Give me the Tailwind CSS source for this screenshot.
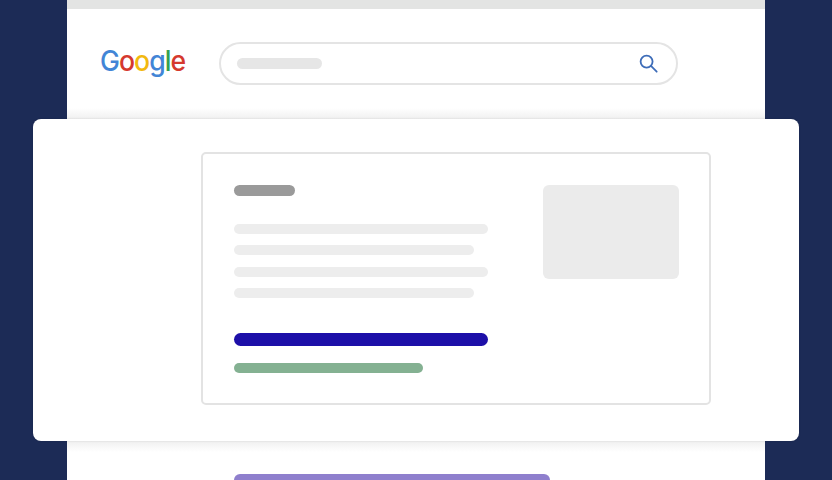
<!DOCTYPE html>
<html>
<head>
<meta charset="utf-8">
<script src="https://cdn.jsdelivr.net/npm/@tailwindcss/browser@4"></script>
</head>
<body class="m-0 h-[480px] w-[832px] overflow-hidden bg-[#1c2b56]">
<div class="ml-[67px] flex h-[480px] w-[698px] flex-col overflow-visible bg-white">
  <div class="h-[9px] shrink-0 bg-[#e3e4e3]"></div>
  <header class="flex h-[99px] shrink-0 items-start pt-[33px]">
    <div class="ml-[33px] -mt-[2px] flex h-[42px] w-[119px] origin-left scale-x-[0.95] items-center font-['Inter',sans-serif] text-[28px] font-medium leading-none tracking-[-1px]">
      <span class="text-[#4285d6]">G</span><span class="text-[#d5392e]">o</span><span class="text-[#f2b90f]">o</span><span class="text-[#4285d6]">g</span><span class="text-[#34a04f]">l</span><span class="text-[#d5392e]">e</span>
    </div>
    <div class="flex h-[43px] w-[459px] items-center justify-between rounded-full border-2 border-[#e4e4e4] pl-[16px] pr-[18px]">
      <div class="h-[11px] w-[85px] rounded-full bg-[#e6e6e6]"></div>
      <svg class="h-[19px] w-[19px]" viewBox="0 0 20 20" fill="none" stroke="#3d6cb8" stroke-width="1.9" stroke-linecap="round">
        <circle cx="8" cy="8" r="6.3"/>
        <path d="M12.6 12.6 L18.6 18.6"/>
      </svg>
    </div>
  </header>
  <div class="h-[11px] shrink-0 bg-gradient-to-b from-white to-[#f0f0f0]"></div>
  <main class="relative z-10 -ml-[34px] flex h-[322px] w-[766px] shrink-0 rounded-lg bg-white pl-[168px] pt-[33px] shadow-[0_0_2px_rgba(0,0,0,0.15)]">
    <div class="flex h-[253px] w-[510px] rounded-[5px] border-2 border-[#e3e3e3] pl-[31px] pt-[31px]">
      <div class="w-[254px]">
        <div class="h-[11px] w-[61px] rounded-full bg-[#9a9a9a]"></div>
        <div class="mt-[28px] h-[10px] w-[254px] rounded-full bg-[#ededed]"></div>
        <div class="mt-[11px] h-[10px] w-[240px] rounded-full bg-[#ededed]"></div>
        <div class="mt-[12px] h-[10px] w-[254px] rounded-full bg-[#ededed]"></div>
        <div class="mt-[11px] h-[10px] w-[240px] rounded-full bg-[#ededed]"></div>
        <div class="mt-[35px] h-[13px] w-[254px] rounded-full bg-[#1d0fa8]"></div>
        <div class="mt-[17px] h-[10px] w-[189px] rounded-full bg-[#84b192]"></div>
      </div>
      <div class="ml-[55px] h-[94px] w-[136px] rounded-md bg-[#ebebeb]"></div>
    </div>
  </main>
  <div class="h-[11px] shrink-0 bg-gradient-to-b from-[#f0f0f0] to-white"></div>
  <div class="ml-[167px] mt-[22px] h-[20px] w-[316px] shrink-0 rounded-t-md bg-[#8f7fcd]"></div>
</div>
</body>
</html>
